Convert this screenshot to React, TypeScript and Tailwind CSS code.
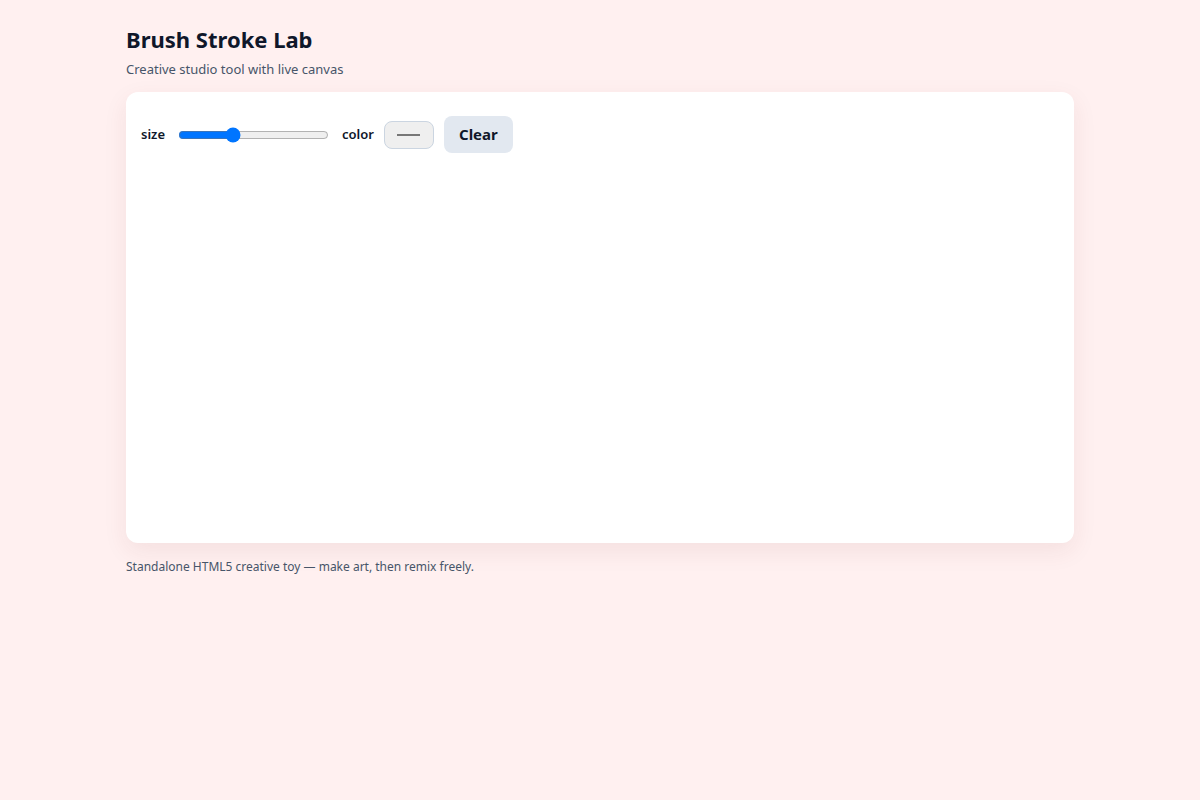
import React, { useState } from 'react';

export default function App() {
  const [size, setSize] = useState(18);
  const [color, setColor] = useState('#777777');

  return (
    <div className="min-h-screen bg-[#fff0f0] font-['Noto_Sans','Open_Sans',sans-serif] text-[#0f172a]">
      <div className="w-[948px] ml-[126px] pt-[24px]">
        <h1 className="text-[22px] font-bold leading-[30px] text-[#0f172a]">Brush Stroke Lab</h1>
        <p className="mt-[6px] text-[13px] leading-[18px] text-[#475569]">Creative studio tool with live canvas</p>

        <div className="mt-[14px] h-[451px] rounded-[12px] bg-white shadow-[0_8px_24px_rgba(120,40,40,0.08)] pl-[15px] pr-[14px] pt-[24px]">
          <div className="flex items-center h-[37px]">
            <label className="text-[13px] font-semibold text-[#0f172a]">size</label>
            <input
              type="range"
              min={1}
              max={50}
              value={size}
              onChange={e => setSize(Number(e.target.value))}
              className="ml-[13px] w-[151px]"
            />
            <label className="ml-[13px] text-[13px] font-semibold text-[#0f172a]">color</label>
            <label className="ml-[10px] relative flex items-center justify-center w-[50px] h-[28px] rounded-[8px] border border-[#cbd5e1] bg-[#efefef] cursor-pointer">
              <span className="block w-[23px] h-[2px]" style={{ backgroundColor: color }} />
              <input
                type="color"
                value={color}
                onChange={e => setColor(e.target.value)}
                className="absolute inset-0 opacity-0 cursor-pointer"
              />
            </label>
            <button className="ml-[10px] h-[37px] w-[69px] rounded-[8px] bg-[#e2e8f0] text-[15px] font-bold text-[#0f172a]">
              Clear
            </button>
          </div>
        </div>

        <p className="mt-[16px] text-[12px] leading-[16px] text-[#475569]">
          Standalone HTML5 creative toy — make art, then remix freely.
        </p>
      </div>
    </div>
  );
}
